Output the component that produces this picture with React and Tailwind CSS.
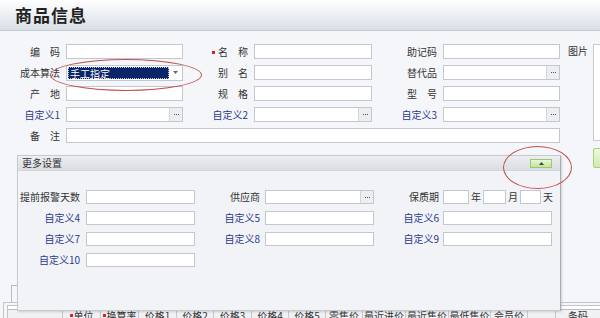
import React from "react";

const font = { fontFamily: '"Noto Sans CJK SC", "Noto Sans", sans-serif' };

function Label({ children, w = "w-[60px]", mr = "mr-[6px]", blue }) {
  return (
    <span
      className={`${w} ${mr} shrink-0 text-right text-[10px] leading-none whitespace-nowrap ${
        blue ? "text-[#2b3a8f]" : "text-[#333]"
      }`}
    >
      {children}
    </span>
  );
}

function Dots() {
  return (
    <div className="w-[13px] bg-[#eceef2] border-l border-[#d3d6db] flex items-center justify-center gap-[1px]">
      <span className="w-[1px] h-[1px] bg-[#555]" />
      <span className="w-[1px] h-[1px] bg-[#555]" />
      <span className="w-[1px] h-[1px] bg-[#555]" />
    </div>
  );
}

function Field({ w, dots, h = "h-[15px]" }) {
  return (
    <div className={`${w} ${h} shrink-0 flex border border-[#c3c7ce] bg-white`}>
      <div className="flex-1" />
      {dots && <Dots />}
    </div>
  );
}

function Star() {
  return <span className="inline-block w-[3px] h-[3px] bg-[#e02020] mr-[3px] align-middle" />;
}

function Row({ children }) {
  return <div className="flex items-center h-[15px]">{children}</div>;
}

function PRow({ children }) {
  return <div className="flex items-center h-[14px]">{children}</div>;
}

const cols = [
  ["w-[55px]", ""],
  ["w-[38px]", "单位", true],
  ["w-[38px]", "换算率", true],
  ["w-[38px]", "价格1"],
  ["w-[37px]", "价格2"],
  ["w-[38px]", "价格3"],
  ["w-[37px]", "价格4"],
  ["w-[37px]", "价格5"],
  ["w-[37px]", "零售价"],
  ["w-[43px]", "最近进价"],
  ["w-[43px]", "最近售价"],
  ["w-[42px]", "最低售价"],
  ["w-[37px]", "会员价"],
  ["w-[28px]", ""],
  ["w-[45px]", "条码"],
];

export default function App() {
  return (
    <div style={font} className="relative w-[600px] h-[318px] overflow-hidden bg-[#f5f6f9] flex flex-col">
      {/* title bar */}
      <div className="h-[31px] shrink-0 bg-linear-to-b from-[#ffffff] to-[#d8dfe5] border-b border-[#c4cad0] flex items-center pl-[15px]">
        <span className="text-[17px] font-bold text-[#222] tracking-[1px]">商品信息</span>
      </div>

      {/* main form */}
      <div className="flex pt-[13px]">
        <div className="w-[560px] flex flex-col gap-[6px]">
          <Row>
            <Label>编　码</Label>
            <Field w="w-[117px]" />
            <Label w="w-[65px]">
              <Star />名　称
            </Label>
            <Field w="w-[118px]" />
            <Label w="w-[65px]">助记码</Label>
            <Field w="w-[117px]" />
          </Row>
          <Row>
            <Label>成本算法</Label>
            <div className="w-[117px] h-[16px] shrink-0 flex border border-[#c3c7ce] bg-white p-[1px]">
              <div className="flex-1 bg-[#0a246a] border border-dotted border-[#c8c8c8] text-white text-[10px] leading-[11px] pl-[1px]">
                手工指定
              </div>
              <div className="w-[12px] flex items-center justify-center">
                <svg width="5" height="3" viewBox="0 0 5 3">
                  <path d="M0 0H5L2.5 3Z" fill="#666" />
                </svg>
              </div>
            </div>
            <Label w="w-[65px]">别　名</Label>
            <Field w="w-[118px]" />
            <Label w="w-[65px]">替代品</Label>
            <Field w="w-[117px]" dots />
          </Row>
          <Row>
            <Label>产　地</Label>
            <Field w="w-[117px]" />
            <Label w="w-[65px]">规　格</Label>
            <Field w="w-[118px]" />
            <Label w="w-[65px]">型　号</Label>
            <Field w="w-[117px]" />
          </Row>
          <Row>
            <Label blue>自定义1</Label>
            <Field w="w-[117px]" dots />
            <Label w="w-[65px]" blue>
              自定义2
            </Label>
            <Field w="w-[118px]" dots />
            <Label w="w-[65px]" blue>
              自定义3
            </Label>
            <Field w="w-[117px]" dots />
          </Row>
          <Row>
            <Label>备　注</Label>
            <Field w="w-[494px]" />
          </Row>
        </div>

        {/* picture */}
        <div className="flex ml-[8px]">
          <span className="text-[10px] leading-none text-[#333] w-[25px] pt-[2px]">图片</span>
          <div className="flex flex-col">
            <div className="w-[40px] h-[97px] border border-[#c8ccd2] bg-white" />
            <div className="mt-[7px] w-[40px] h-[20px] border border-[#a6d07c] rounded-[2px] bg-linear-to-b from-[#eef9e0] to-[#cfe9ac]" />
          </div>
        </div>
      </div>

      {/* background tabs / grid header */}
      <div className="mt-auto shrink-0">
        <div className="ml-[11px] h-[17px] border-l border-t border-[#b8bcc2] w-[200px]" />
        <div className="ml-[3px] h-[16px] border-l border-t border-[#c2c5ca] pt-[2px]">
          <div className="ml-[3px] h-[20px] border-l border-t border-[#c2c5ca] bg-white pt-[3px]">
            <div className="flex h-[20px] border-t border-[#b8bcc2] bg-[#f0f1f3]">
              {cols.map(([w, t, star], i) => (
                <div
                  key={i}
                  className={`${w} shrink-0 border-r border-[#c4c7cc] text-[10px] leading-none text-[#333] text-center pt-[1px] whitespace-nowrap`}
                >
                  {star && <span className="inline-block w-[3px] h-[3px] bg-[#e02020] mr-[1px] align-top mt-[3px]" />}
                  {t}
                </div>
              ))}
            </div>
          </div>
        </div>
      </div>

      {/* "more settings" popup */}
      <div className="absolute left-[17px] top-[155px] w-[544px] h-[156px] border border-[#c6cad0] border-r-[#a9adb3] bg-[#f2f3f7] shadow-[1px_1px_2px_rgba(0,0,0,0.15)] flex flex-col">
        <div className="h-[15px] shrink-0 bg-linear-to-b from-[#eceef1] to-[#dadde2] border-b border-[#d2d5da] flex items-center pl-[4px] pr-[8px]">
          <span className="text-[10px] leading-none text-[#333]">更多设置</span>
          <div className="ml-auto w-[22px] h-[9px] border border-[#9cc86e] bg-linear-to-b from-[#e9f7d6] to-[#c4e49c] flex items-center justify-center">
            <svg width="5" height="3" viewBox="0 0 5 3">
              <path d="M0 3H5L2.5 0Z" fill="#444" />
            </svg>
          </div>
        </div>
        <div className="flex flex-col gap-[7px] pt-[19px]">
          <PRow>
            <Label w="w-[62px]">提前报警天数</Label>
            <Field w="w-[109px]" h="h-[14px]" />
            <Label w="w-[65px]" mr="mr-[5px]">
              供应商
            </Label>
            <Field w="w-[109px]" h="h-[14px]" dots />
            <Label w="w-[65px]" mr="mr-[4px]">
              保质期
            </Label>
            <Field w="w-[26px]" h="h-[14px]" />
            <span className="text-[10px] leading-none text-[#333] mx-[2px]">年</span>
            <Field w="w-[23px]" h="h-[14px]" />
            <span className="text-[10px] leading-none text-[#333] mx-[2px]">月</span>
            <Field w="w-[21px]" h="h-[14px]" />
            <span className="text-[10px] leading-none text-[#333] ml-[2px]">天</span>
          </PRow>
          <PRow>
            <Label w="w-[62px]" blue>
              自定义4
            </Label>
            <Field w="w-[109px]" h="h-[14px]" />
            <Label w="w-[65px]" mr="mr-[5px]" blue>
              自定义5
            </Label>
            <Field w="w-[109px]" h="h-[14px]" />
            <Label w="w-[65px]" mr="mr-[4px]" blue>
              自定义6
            </Label>
            <Field w="w-[109px]" h="h-[14px]" />
          </PRow>
          <PRow>
            <Label w="w-[62px]" blue>
              自定义7
            </Label>
            <Field w="w-[109px]" h="h-[14px]" />
            <Label w="w-[65px]" mr="mr-[5px]" blue>
              自定义8
            </Label>
            <Field w="w-[109px]" h="h-[14px]" />
            <Label w="w-[65px]" mr="mr-[4px]" blue>
              自定义9
            </Label>
            <Field w="w-[109px]" h="h-[14px]" />
          </PRow>
          <PRow>
            <Label w="w-[62px]" blue>
              自定义10
            </Label>
            <Field w="w-[109px]" h="h-[14px]" />
          </PRow>
        </div>
      </div>

      {/* red annotation ellipses */}
      <div className="absolute left-[50px] top-[59px] w-[152px] h-[32px] rounded-[50%] border border-[#c0504d]" />
      <div className="absolute left-[503px] top-[146px] w-[69px] h-[43px] rounded-[50%] border border-[#c0504d]" />
    </div>
  );
}
